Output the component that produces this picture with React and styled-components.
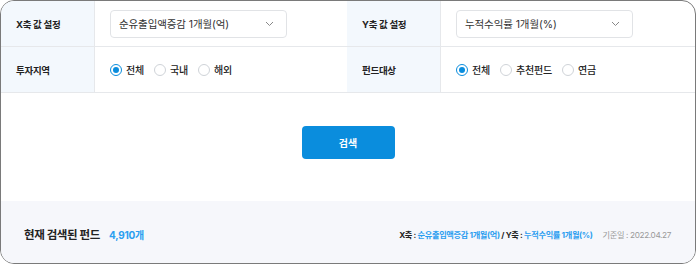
import styled, { createGlobalStyle, css } from "styled-components";
import { useState } from "react";

const COLOR = {
  blue: "#0a8ddd",
  link: "#2b9ef0",
  text: "#222",
  line: "#e6e8eb",
  labelBg: "#f3f8fd",
  footerBg: "#f6f7fb",
};

const GlobalStyle = createGlobalStyle`
  html, body {
    margin: 0;
    padding: 0;
    background: #ffffff;
  }
  body {
    font-family: Inter, "Noto Sans CJK KR", sans-serif;
    color: ${COLOR.text};
  }
`;

const Panel = styled.div`
  box-sizing: border-box;
  width: 696px;
  height: 264px;
  border: 1px solid #7a7a7a;
  border-radius: 14px;
  overflow: hidden;
  display: flex;
  flex-direction: column;
  background: #fff;
`;

const FilterGrid = styled.div`
  display: grid;
  grid-template-columns: 346px 1fr;
`;

const Row = styled.div`
  display: grid;
  grid-template-columns: 94px 1fr;
  height: 46px;
  border-bottom: 1px solid ${COLOR.line};
  box-sizing: border-box;
`;

const Label = styled.div`
  display: flex;
  align-items: center;
  padding-left: 15px;
  background: ${COLOR.labelBg};
  border-right: 1px solid ${COLOR.line};
  font-size: 9.5px;
  font-weight: 700;
  letter-spacing: -0.3px;
`;

const Cell = styled.div`
  display: flex;
  align-items: center;
  padding-left: 15px;
`;

const Select = styled.div`
  box-sizing: border-box;
  width: 177px;
  height: 28px;
  border: 1px solid #e1e3e6;
  border-radius: 4px;
  display: flex;
  align-items: center;
  justify-content: space-between;
  padding: 0 12px 0 8px;
  font-size: 10.5px;
  letter-spacing: -0.1px;
  color: #333;
`;

const RadioGroup = styled.div`
  display: flex;
  align-items: center;
  gap: 10px;
`;

const RadioItem = styled.label`
  display: flex;
  align-items: center;
  gap: 4px;
  font-size: 10px;
  font-weight: 500;
  letter-spacing: -0.2px;
  cursor: pointer;
`;

const RadioDot = styled.span`
  box-sizing: border-box;
  width: 12px;
  height: 12px;
  border-radius: 50%;
  border: 1px solid #cfd3d8;
  display: inline-flex;
  align-items: center;
  justify-content: center;
  ${(p) =>
    p.$checked &&
    css`
      border-color: ${COLOR.blue};
      &::after {
        content: "";
        width: 6px;
        height: 6px;
        border-radius: 50%;
        background: ${COLOR.blue};
      }
    `}
`;

const Actions = styled.div`
  flex: 1;
  display: flex;
  justify-content: center;
  padding-top: 33px;
`;

const SearchButton = styled.button`
  width: 93px;
  height: 33px;
  border: none;
  border-radius: 4px;
  background: ${COLOR.blue};
  color: #fff;
  font-family: inherit;
  font-size: 10px;
  font-weight: 700;
  cursor: pointer;
`;

const Footer = styled.div`
  height: 58px;
  background: ${COLOR.footerBg};
  display: flex;
  align-items: center;
  justify-content: space-between;
  padding: 4px 24px 0 23px;
`;

const Count = styled.div`
  display: flex;
  align-items: baseline;
  gap: 9px;
  font-size: 11.5px;
  font-weight: 700;
  letter-spacing: -0.4px;
  span {
    font-size: 10px;
    color: ${COLOR.link};
    letter-spacing: -0.2px;
  }
`;

const Meta = styled.div`
  display: flex;
  align-items: center;
  gap: 10px;
  font-size: 8.2px;
  letter-spacing: -0.35px;
`;

const Axis = styled.div`
  font-weight: 700;
  em {
    font-style: normal;
    color: ${COLOR.link};
  }
`;

const BaseDate = styled.div`
  color: #999;
`;

const Chevron = () => (
  <svg width="9" height="6" viewBox="0 0 9 6" fill="none">
    <path d="M1 1l3.5 3.5L8 1" stroke="#888" strokeWidth="1" />
  </svg>
);

const Radios = ({ options }) => {
  const [value, setValue] = useState(options[0]);
  return (
    <RadioGroup>
      {options.map((o) => (
        <RadioItem key={o} onClick={() => setValue(o)}>
          <RadioDot $checked={value === o} />
          {o}
        </RadioItem>
      ))}
    </RadioGroup>
  );
};

const App = () => {
  return (
    <>
      <GlobalStyle />
      <Panel>
        <FilterGrid>
          <Row>
            <Label>X축 값 설정</Label>
            <Cell>
              <Select>
                순유출입액증감 1개월(억)
                <Chevron />
              </Select>
            </Cell>
          </Row>
          <Row>
            <Label>Y축 값 설정</Label>
            <Cell>
              <Select>
                누적수익률 1개월(%)
                <Chevron />
              </Select>
            </Cell>
          </Row>
          <Row>
            <Label>투자지역</Label>
            <Cell>
              <Radios options={["전체", "국내", "해외"]} />
            </Cell>
          </Row>
          <Row>
            <Label>펀드대상</Label>
            <Cell>
              <Radios options={["전체", "추천펀드", "연금"]} />
            </Cell>
          </Row>
        </FilterGrid>
        <Actions>
          <SearchButton>검색</SearchButton>
        </Actions>
        <Footer>
          <Count>
            현재 검색된 펀드 <span>4,910개</span>
          </Count>
          <Meta>
            <Axis>
              X축 : <em>순유출입액증감 1개월(억)</em> / Y축 :{" "}
              <em>누적수익률 1개월(%)</em>
            </Axis>
            <BaseDate>기준일 : 2022.04.27</BaseDate>
          </Meta>
        </Footer>
      </Panel>
    </>
  );
};

export default App;
